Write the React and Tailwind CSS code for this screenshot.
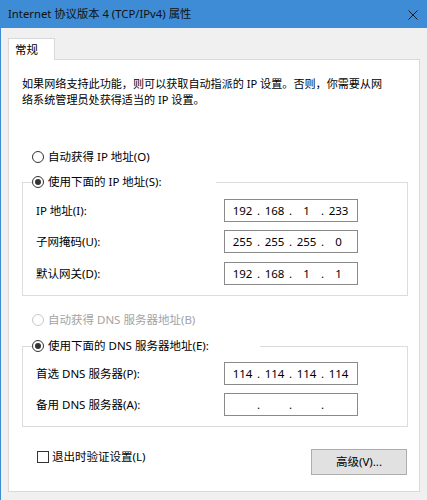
import React, { Fragment } from "react";

function Radio({ checked, disabled, label }) {
  return (
    <div className="flex items-center h-[16px]">
      <span
        className={`w-[12px] h-[12px] rounded-full border bg-white flex items-center justify-center ${
          disabled ? "border-[#c8c8c8]" : "border-[#333333]"
        }`}
      >
        {checked && <span className="w-[6px] h-[6px] rounded-full bg-[#333333]" />}
      </span>
      <span className={`ml-[4px] whitespace-nowrap ${disabled ? "text-[#a3a3a3]" : "text-black"}`}>{label}</span>
    </div>
  );
}

function IpBox({ value }) {
  return (
    <div className="w-[134px] h-[23px] border border-[#8a8a8a] bg-white flex items-center pl-[5px]">
      {value.map((o, i) => (
        <Fragment key={i}>
          {i > 0 && <span className="w-[7px] text-center">.</span>}
          <span className="w-[25px] text-center">{o}</span>
        </Fragment>
      ))}
    </div>
  );
}

function Row({ label, value, className = "" }) {
  return (
    <div className={`flex items-center ${className}`}>
      <span className="w-[201px] pl-[13px] whitespace-nowrap">{label}</span>
      <IpBox value={value} />
    </div>
  );
}

export default function App() {
  return (
    <div className="w-[427px] h-[500px] bg-[#f0f0f0] border-l border-[#3d8cd5] overflow-hidden text-[11.5px] leading-[16px] text-black font-['Noto_Sans','Noto_Sans_CJK_SC',sans-serif]">
      {/* Title bar */}
      <div className="h-[28px] bg-[#3d8cd5] flex items-center justify-between pl-[7px] pr-[9px]">
        <span className="text-[11.3px] text-[#111111] whitespace-nowrap">Internet 协议版本 4 (TCP/IPv4) 属性</span>
        <svg width="10" height="10" viewBox="0 0 10 10" className="mt-[1px]">
          <path d="M0.5 0.5 L9.5 9.5 M9.5 0.5 L0.5 9.5" stroke="#1a1a1a" strokeWidth="1" fill="none" />
        </svg>
      </div>

      <div className="pt-[10px] pl-[7px]">
        {/* Tab */}
        <div className="relative z-10 w-[47px] h-[22px] -mb-px bg-white border border-b-0 border-[#d9d9d9] pl-[6px] flex items-center">
          常规
        </div>

        {/* Panel */}
        <div className="w-[412px] h-[433px] bg-white border border-[#d9d9d9] pt-[16px] pl-[13px]">
          <p className="whitespace-nowrap text-[11.1px]">
            如果网络支持此功能，则可以获取自动指派的 IP 设置。否则，你需要从网
            <br />
            络系统管理员处获得适当的 IP 设置。
          </p>

          <div className="mt-[41px] ml-[10px]">
            <Radio label="自动获得 IP 地址(O)" />
          </div>

          <fieldset className="mt-[9px] w-[386px] border border-[#dcdcdc] pb-[10px]">
            <legend className="ml-[9px] w-[184px]">
              <Radio checked label="使用下面的 IP 地址(S):" />
            </legend>
            <Row className="mt-[9px]" label="IP 地址(I):" value={["192", "168", "1", "233"]} />
            <Row className="mt-[8px]" label="子网掩码(U):" value={["255", "255", "255", "0"]} />
            <Row className="mt-[9px]" label="默认网关(D):" value={["192", "168", "1", "1"]} />
          </fieldset>

          <div className="mt-[16px] ml-[10px]">
            <Radio disabled label="自动获得 DNS 服务器地址(B)" />
          </div>

          <fieldset className="mt-[10px] w-[386px] border border-[#dcdcdc] pb-[10px]">
            <legend className="ml-[9px] w-[228px]">
              <Radio checked label="使用下面的 DNS 服务器地址(E):" />
            </legend>
            <Row className="mt-[8px]" label="首选 DNS 服务器(P):" value={["114", "114", "114", "114"]} />
            <Row className="mt-[8px]" label="备用 DNS 服务器(A):" value={["", "", "", ""]} />
          </fieldset>

          <div className="mt-[22px] w-[385px] flex items-start justify-between">
            <div className="ml-[15px] h-[16px] flex items-center">
              <span className="w-[12px] h-[12px] border border-[#333333] bg-white" />
              <span className="ml-[3px]">退出时验证设置(L)</span>
            </div>
            <button className="w-[96px] h-[26px] bg-[#e1e1e1] border border-[#adadad] text-black">高级(V)...</button>
          </div>
        </div>
      </div>
    </div>
  );
}
